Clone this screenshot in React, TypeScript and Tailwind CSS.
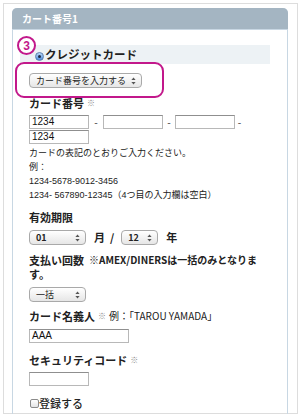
import React from "react";

const jp = "font-['Noto_Sans_CJK_JP',sans-serif]";
const latin = "font-['Liberation_Sans','Noto_Sans_CJK_JP',sans-serif]";

function Arrows() {
  return (
    <svg width="5" height="8" viewBox="0 0 5 8" className="shrink-0">
      <path d="M2.5 0.5 L4.6 3 L0.4 3 Z" fill="#555" />
      <path d="M2.5 7.5 L4.6 5 L0.4 5 Z" fill="#555" />
    </svg>
  );
}

function FakeSelect({ label, w }: { label: string; w: string }) {
  return (
    <div
      className={`${w} h-[15px] flex items-center justify-between rounded-[4px] border border-[#a9a9a9] bg-gradient-to-b from-white to-[#e6e6e6] pl-[6px] pr-[5px] text-[9px] leading-none whitespace-nowrap text-[#222] ${jp}`}
    >
      <span>{label}</span>
      <Arrows />
    </div>
  );
}

function Input({ w, value }: { w: string; value?: string }) {
  return (
    <div
      className={`${w} h-[14px] border border-[#b8b8b8] border-t-[#8f8f8f] bg-white pl-[2px] flex items-center text-[10px] leading-none text-[#111] ${latin}`}
    >
      {value}
    </div>
  );
}

function Label({ children }: { children: React.ReactNode }) {
  return (
    <div className={`h-[16px] flex items-center whitespace-nowrap text-[11px] leading-none font-bold text-[#222] ${jp}`}>
      {children}
    </div>
  );
}

function Mark() {
  return <span className="text-[8px] leading-none font-normal text-[#8a8a8a] mx-[3px]">※</span>;
}

function Line({ children }: { children: React.ReactNode }) {
  return <div className="h-[14px] flex items-center whitespace-nowrap leading-none">{children}</div>;
}

export default function App() {
  return (
    <div className={`w-[300px] h-[414px] bg-white overflow-hidden relative ${jp}`}>
      <div className="ml-[3px] mt-[3px] w-[295px] h-[411px] border-l border-t border-r border-b border-[#dddddd] pl-[8px] pt-[4px]">
        <div className="w-[276px] h-[406px] border-x border-[#c8d7e3] rounded-t-[5px]">
          <div className="-mx-px h-[21px] bg-[#a4b5c2] rounded-t-[5px] pl-[10px] flex items-center text-[10px] font-bold text-white">
            カート番号1
          </div>
          <div className="h-px bg-[#c8d7e3]" />
          <div className="pl-[7px]">
            <div className="mt-[15px] w-[250px] h-[19px] bg-[#edf2f5] flex items-center pl-[15px]">
              <div className="w-[9px] h-[9px] mt-[4px] rounded-full border border-[#5b7fae] bg-gradient-to-b from-[#b9d7f7] to-[#4d8ddc] flex items-center justify-center">
                <div className="w-[3px] h-[3px] rounded-full bg-[#1b2a42]" />
              </div>
              <span className="ml-[1px] text-[11.5px] font-bold text-[#222] leading-none">クレジットカード</span>
            </div>
            <div className="pl-[9px]">
              <div className="mt-[9px]">
                <FakeSelect label="カード番号を入力する" w="w-[113px]" />
              </div>
              <div className="mt-[7px]">
                <Label>
                  カード番号<Mark />
                </Label>
              </div>
              <div className="mt-[4px] flex items-center text-[10px] leading-none text-[#333]">
                <Input w="w-[60px]" value="1234" />
                <span className="w-[14px] text-center">-</span>
                <Input w="w-[60px]" />
                <span className="w-[12px] text-center">-</span>
                <Input w="w-[60px]" />
                <span className="w-[9px] text-center">-</span>
              </div>
              <div className="mt-[1px]">
                <Input w="w-[60px]" value="1234" />
              </div>
              <div className={`mt-[2px] text-[9px] text-[#222] ${latin}`}>
                <Line>カードの表記のとおりご入力ください。</Line>
                <Line>例：</Line>
                <Line>1234-5678-9012-3456</Line>
                <Line>1234- 567890-12345（4つ目の入力欄は空白）</Line>
              </div>
              <div className="mt-[7px]">
                <Label>有効期限</Label>
              </div>
              <div className={`mt-[5px] h-[15px] flex items-center text-[11px] leading-none font-bold text-[#222] ${jp}`}>
                <FakeSelect label="01" w="w-[57px]" />
                <span className="ml-[8px]">月</span>
                <span className="ml-[5px]">/</span>
                <div className="ml-[7px]">
                  <FakeSelect label="12" w="w-[37px]" />
                </div>
                <span className="ml-[8px]">年</span>
              </div>
              <div className={`mt-[8px] text-[11px] font-bold text-[#222] ${jp}`}>
                <Line>
                  支払い回数
                  <span className="ml-[5px] text-[10px]">※AMEX/DINERSは一括のみとなりま</span>
                </Line>
                <Line>す。</Line>
              </div>
              <div className="mt-[6px]">
                <FakeSelect label="一括" w="w-[57px]" />
              </div>
              <div className="mt-[6px]">
                <Label>
                  カード名義人<Mark />
                  <span className="font-normal text-[10px]">例：「TAROU YAMADA」</span>
                </Label>
              </div>
              <div className="mt-[5px]">
                <Input w="w-[100px]" value="AAA" />
              </div>
              <div className="mt-[9px]">
                <Label>
                  セキュリティコード<Mark />
                </Label>
              </div>
              <div className="mt-[4px]">
                <Input w="w-[60px]" />
              </div>
              <div className="mt-[9px] flex items-center h-[16px]">
                <div className="ml-[1px] w-[9px] h-[9px] border border-[#8a8a8a] rounded-[2px] bg-gradient-to-b from-white to-[#e4e4e4]" />
                <span className="text-[11px] leading-none font-medium text-[#222]">登録する</span>
              </div>
            </div>
          </div>
        </div>
      </div>
      <div className="absolute left-[15px] top-[62px] w-[149px] h-[36px] border-2 border-[#c2188b] rounded-[9px]" />
      <div className="absolute left-[17px] top-[36px] w-[19px] h-[19px] rounded-full border-[2.5px] border-[#c2188b] bg-white flex items-center justify-center text-[12px] font-bold leading-none text-[#c2188b] font-['Liberation_Sans',sans-serif]">
        3
      </div>
    </div>
  );
}
